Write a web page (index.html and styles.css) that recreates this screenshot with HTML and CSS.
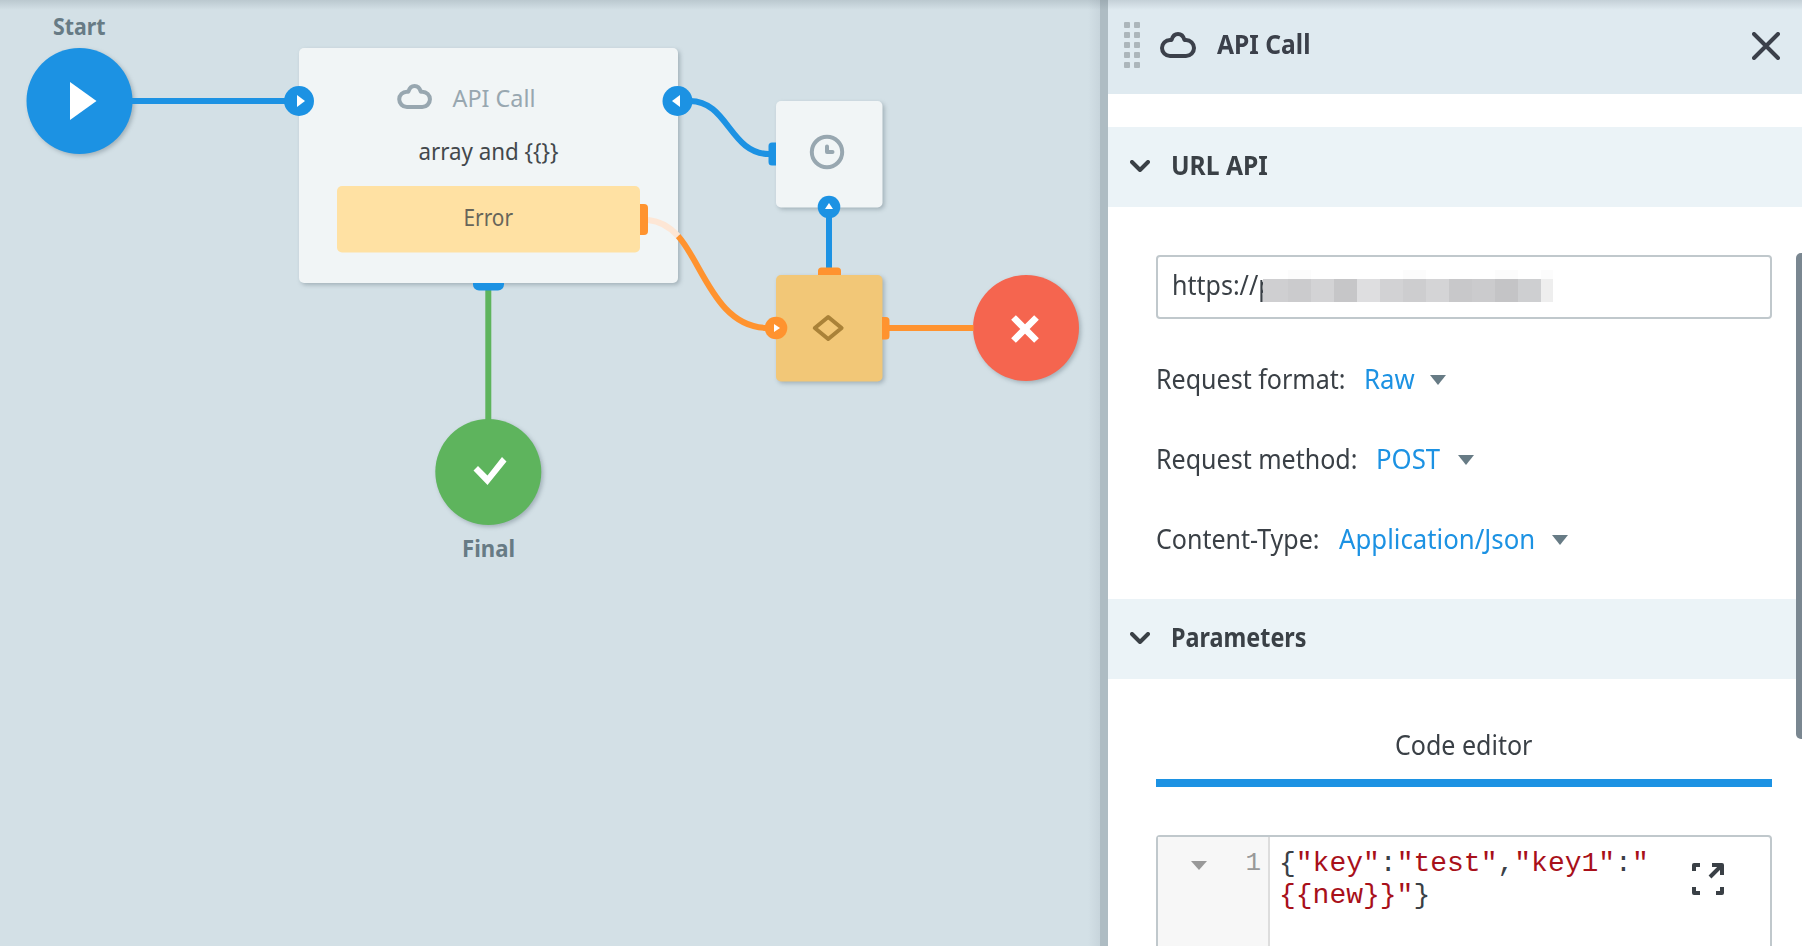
FILE: index.html
```html
<!DOCTYPE html>
<html lang="en">
<head>
<meta charset="utf-8">
<title>API Call</title>
<link rel="stylesheet" href="styles.css">
</head>
<body>
<div class="app">
  <main class="canvas">
    <svg class="diagram" width="1100" height="946" viewBox="0 0 1100 946">
      <defs>
        <filter id="drop" x="-20%" y="-20%" width="140%" height="140%" color-interpolation-filters="sRGB">
          <feDropShadow dx="2" dy="2" stdDeviation="2" flood-color="#5a6b75" flood-opacity=".4"/>
        </filter>
      </defs>

      <!-- shapes -->
      <g filter="url(#drop)">
        <circle class="blue" cx="79.500" cy="101" r="53"/>
        <rect class="card" x="299" y="48" width="379" height="235" rx="5"/>
        <rect class="card" x="776" y="101" width="106.500" height="106.500" rx="5"/>
        <rect class="cond" x="776" y="275" width="106.500" height="106.500" rx="5"/>
        <circle class="red" cx="1026" cy="328" r="53"/>
        <circle class="green" cx="488.300" cy="472" r="53"/>
      </g>

      <!-- links -->
      <g class="links">
        <path class="l-blue" d="M132 101H286"/>
        <path class="l-blue" d="M690 101C728 101 730 154 769 154"/>
        <path class="l-blue" d="M829 216V268"/>
        <path class="l-orange" d="M678 236C702 262 716 328 768 328"/>
        <path class="l-faded" d="M648 220C659 221 669 226 678 236"/>
        <path class="l-orange" d="M889 328H973.500"/>
        <path class="l-green" d="M488.300 290V420"/>
      </g>

      <!-- start -->
      <text class="caption" x="53" y="35" textLength="52.500" lengthAdjust="spacingAndGlyphs">Start</text>
      <path class="white" d="M70 82L96.500 101L70 120Z"/>

      <!-- API call node -->
      <g transform="translate(397.300 84) scale(.96)"><path class="cloud" d="M10 24A8 8 0 0 1 10 8H11.500C12.500 4.500 15 2 18 2C21 2 23.500 4.500 24.500 8H26A8 8 0 0 1 26 24Z"/></g>
      <text class="kind" x="452.500" y="107" textLength="83" lengthAdjust="spacingAndGlyphs">API Call</text>
      <text class="name" x="418.500" y="160" textLength="140" lengthAdjust="spacingAndGlyphs">array and {{}}</text>
      <rect class="error" x="337" y="186" width="303" height="66.500" rx="5"/>
      <text class="error-text" x="463.500" y="226" textLength="49.500" lengthAdjust="spacingAndGlyphs">Error</text>
      <path class="orange" d="M640 204h4a4 4 0 0 1 4 4v23a4 4 0 0 1-4 4h-4z"/>
      <path class="blue" d="M473 283h31v1.500a6 6 0 0 1-6 6h-19a6 6 0 0 1-6-6z"/>
      <circle class="blue" cx="299" cy="101" r="15"/>
      <path class="white" d="M297 95L305 101L297 107Z"/>
      <circle class="blue" cx="677.500" cy="101" r="15"/>
      <path class="white" d="M680 95L672 101L680 107Z"/>

      <!-- delay node -->
      <path class="blue" d="M776 142.500h-4a3.500 3.500 0 0 0-3.500 3.500v16a3.500 3.500 0 0 0 3.500 3.500h4z"/>
      <circle class="clock" cx="827" cy="152" r="15.200"/>
      <path class="hands" d="M827 146.500V152H832.500"/>
      <circle class="blue" cx="829" cy="207" r="11.300"/>
      <path class="white" d="M829 203L833 209H825Z"/>

      <!-- condition node -->
      <path class="orange" d="M818 275v-4a3.500 3.500 0 0 1 3.500-3.500h16a3.500 3.500 0 0 1 3.500 3.500v4z"/>
      <path class="orange" d="M882 317h4a3.500 3.500 0 0 1 3.500 3.500v15.500a3.500 3.500 0 0 1-3.500 3.500h-4z"/>
      <path class="diamond" d="M814.800 328L828.200 317L841.600 328L828.200 339Z"/>
      <circle class="orange" cx="776" cy="328" r="11.300"/>
      <path class="white" d="M774 324L780 328L774 332Z"/>

      <!-- end nodes -->
      <path class="cross" d="M1013.500 317.500L1036.500 340.500M1036.500 317.500L1013.500 340.500"/>
      <path class="white" d="M473.500 470.500L478 466L487.500 475.500L502 457L506.500 461.500L487.500 485Z"/>
      <text class="caption" x="462" y="557" textLength="53" lengthAdjust="spacingAndGlyphs">Final</text>
    </svg>
  </main>

  <div class="divider"></div>

  <aside class="panel">
    <header class="panel-head">
      <div class="grip"><i></i><i></i><i></i><i></i><i></i><i></i><i></i><i></i><i></i><i></i></div>
      <svg class="head-cloud" width="36" height="26" viewBox="0 0 36 26"><path d="M10 24A8 8 0 0 1 10 8H11.500C12.500 4.500 15 2 18 2C21 2 23.500 4.500 24.500 8H26A8 8 0 0 1 26 24Z"/></svg>
      <h1 class="head-title"><span class="fit-bold wide">API Call</span></h1>
      <svg class="close" width="28" height="28" viewBox="0 0 28 28"><path d="M2 2L26 26M26 2L2 26"/></svg>
    </header>

    <div class="body">
      <h2 class="section">
        <svg width="20" height="12" viewBox="0 0 20 12"><path d="M2 2L10 10L18 2"/></svg>
        <span class="fit-bold wide">URL API</span>
      </h2>
      <div class="url-form">
        <div class="url-input">
          <span class="fit url-text">https://p</span>
          <svg class="mask" width="292" height="32" viewBox="0 0 292 32" shape-rendering="crispEdges">
            <rect x="0" y="0" width="292" height="32" fill="#fff"/>
            <rect x="25" y="0" width="23" height="9" fill="#fcfcfc"/>
            <rect x="140" y="0" width="23" height="9" fill="#fcfcfc"/>
            <rect x="232" y="0" width="23" height="9" fill="#fcfcfc"/>
            <rect x="278" y="0" width="12" height="9" fill="#fcfcfc"/>
            <rect x="0" y="9" width="25" height="23" fill="#cfcfd1"/>
            <rect x="25" y="9" width="23" height="23" fill="#cbcbcd"/>
            <rect x="48" y="9" width="23" height="23" fill="#d3d3d5"/>
            <rect x="71" y="9" width="23" height="23" fill="#c6c6c8"/>
            <rect x="94" y="9" width="23" height="23" fill="#dedee0"/>
            <rect x="117" y="9" width="23" height="23" fill="#d2d2d4"/>
            <rect x="140" y="9" width="23" height="23" fill="#cdcdcf"/>
            <rect x="163" y="9" width="23" height="23" fill="#d4d4d6"/>
            <rect x="186" y="9" width="23" height="23" fill="#c8c8ca"/>
            <rect x="209" y="9" width="23" height="23" fill="#cbcbcd"/>
            <rect x="232" y="9" width="23" height="23" fill="#c4c4c6"/>
            <rect x="255" y="9" width="23" height="23" fill="#cecfd1"/>
            <rect x="278" y="9" width="12" height="23" fill="#eee"/>
          </svg>
        </div>
        <div class="option"><span class="fit label-format">Request format:</span><span class="fit value v-raw">Raw</span><i class="caret"></i></div>
        <div class="option"><span class="fit label-method">Request method:</span><span class="fit value v-post">POST</span><i class="caret"></i></div>
        <div class="option"><span class="fit label-type">Content-Type:</span><span class="fit value v-json">Application/Json</span><i class="caret"></i></div>
      </div>

      <h2 class="section">
        <svg width="20" height="12" viewBox="0 0 20 12"><path d="M2 2L10 10L18 2"/></svg>
        <span class="fit-bold">Parameters</span>
      </h2>
      <div class="params">
        <div class="tab"><span class="fit tab-text">Code editor</span></div>
        <div class="editor">
          <div class="gutter"><i class="fold"></i><span>1</span></div>
          <div class="code">
            <div class="line"><span>{</span><b>"key"</b><span>:</span><b>"test"</b><span>,</span><b>"key1"</b><span>:</span><b>"</b></div>
            <div class="line"><b>{{new}}"</b><span>}</span></div>
          </div>
          <svg class="expand" width="32" height="32" viewBox="0 0 32 32">
            <path d="M2 8V2H8M2 24V30H8M24 30H30V24"/><path d="M20 2H30V12M30 2L18 14"/>
          </svg>
        </div>
      </div>
    </div>
    <div class="scroll-thumb"></div>
  </aside>
  <div class="top-shade"></div>
</div>
</body>
</html>
```
FILE: styles.css
```css
* { box-sizing: border-box; }
body { margin: 0; font-family: "Noto Sans", "Open Sans", sans-serif; color: #3a4046; }
.app { position: relative; display: flex; width: 1802px; height: 946px; overflow: hidden; }

/* canvas */
.canvas { width: 1100px; background: linear-gradient(to right, #d3e0e6 1088px, #c8d5dc 1100px); }
.diagram { display: block; }
.blue { fill: #1c92e3; }
.green { fill: #5eb45d; }
.red { fill: #f5654f; }
.orange { fill: #ff932f; }
.white { fill: #fff; }
.card { fill: #f1f5f6; }
.cond { fill: #f2c777; }
.error { fill: #ffe1a3; }
.links path { fill: none; stroke-width: 6; }
.links .l-blue { stroke: #1c92e3; }
.links .l-orange { stroke: #ff932f; }
.links .l-faded { stroke: #fde6d5; }
.links .l-green { stroke: #5eb45d; }
.diagram text { font-size: 23.5px; }
.caption { fill: #677b85; font-weight: 700; }
.kind { fill: #98a7b0; }
.name { fill: #43484c; }
.error-text { fill: #67655a; }
.cloud { fill: none; stroke: #98a7b0; stroke-width: 4.2; stroke-linejoin: round; }
.clock { fill: none; stroke: #98a7b0; stroke-width: 4; }
.hands { fill: none; stroke: #98a7b0; stroke-width: 4; stroke-linecap: round; stroke-linejoin: round; }
.diamond { fill: none; stroke: #aa8238; stroke-width: 4; stroke-linejoin: round; }
.cross { fill: none; stroke: #fff; stroke-width: 6.6; }

.divider { width: 8px; background: #aebcc3; }

/* side panel */
.panel { position: relative; width: 694px; background: #fff; font-size: 27.5px; }
.panel-head { display: flex; align-items: flex-start; height: 94px; padding: 22px 22px 0 16px; background: #dfeaf0; }
.grip { display: grid; grid-template-columns: 6px 6px; gap: 4px; width: 16px; }
.grip i { height: 6px; border-radius: 1px; background: #acb6bb; }
.head-cloud { margin: 10px 0 0 20px; fill: none; stroke: #3b404a; stroke-width: 4; stroke-linejoin: round; }
.head-title { flex: 1; margin: 2px 0 0 21px; font-size: 27.5px; line-height: 40px; color: #3b404a; }
.close { margin-top: 10px; fill: none; stroke: #3b404a; stroke-width: 4; stroke-linecap: round; }
.fit, .fit-bold { display: inline-block; white-space: nowrap; transform-origin: 0 50%; }
.fit { transform: scaleX(.91); }
.fit-bold { transform: scaleX(.85); font-weight: 700; }
.fit-bold.wide { transform: scaleX(.895); }

.body { padding-top: 33px; }
.section { display: flex; align-items: center; gap: 21px; height: 80px; margin: 0; padding: 0 0 5px 22px; background: #ebf3f7; font-size: 27.5px; }
.section svg { margin-top: 3px; fill: none; stroke: #3a4046; stroke-width: 4; stroke-linecap: round; stroke-linejoin: round; }
.url-form { height: 392px; padding: 48px 30px 0 48px; }
.url-input { display: flex; align-items: flex-start; height: 64px; margin-bottom: 21px; padding: 13px 0 0 14px; border: 2px solid #c0c8cc; border-radius: 4px; }
.url-text { width: 91px; line-height: 30px; }
.mask { position: relative; flex: none; }
.option { display: flex; align-items: center; height: 80px; padding-bottom: 3px; }
.fit.value { transform: scaleX(.937); color: #1c92e3; }
.label-format { width: 208px; }
.label-method { width: 220px; }
.label-type { width: 183px; }
.v-raw { width: 66px; }
.v-post { width: 82px; }
.v-json { width: 213px; }
.caret { border: 8px solid transparent; border-top: 10px solid #677b85; border-bottom: 0; margin-top: 2px; }

.params { padding: 31px 30px 0 48px; }
.tab { display: flex; justify-content: center; height: 77px; padding-top: 15px; border-bottom: 8px solid #1c92e3; line-height: 40px; }
.tab-text { width: 138px; }
.editor { display: flex; height: 200px; margin-top: 48px; border: 2px solid #c0c8cc; border-radius: 4px; font-family: "Liberation Mono", monospace; }
.gutter { display: flex; justify-content: space-between; width: 112px; padding: 10px 7px 0 33px; border-right: 2px solid #ddd; background: #f7f7f7; color: #999; font-size: 26px; line-height: 32px; }
.fold { height: 9px; margin-top: 14px; border: 8px solid transparent; border-top: 9px solid #999; border-bottom: 0; }
.code { width: 422px; padding: 11px 0 0 9px; font-size: 28px; line-height: 32px; }
.line { display: flex; height: 32px; white-space: pre; }
.code b { color: #a8101a; font-weight: 400; }
.expand { margin-top: 26px; fill: none; stroke: #3a4046; stroke-width: 4; stroke-linejoin: round; }
.scroll-thumb { position: absolute; top: 253px; right: 0; width: 6px; height: 486px; border-radius: 5px 0 0 5px; background: #7a8791; }
.top-shade { position: absolute; top: 0; left: 0; width: 100%; height: 10px; background: linear-gradient(rgba(90, 105, 115, .2), rgba(90, 105, 115, 0)); }
```
